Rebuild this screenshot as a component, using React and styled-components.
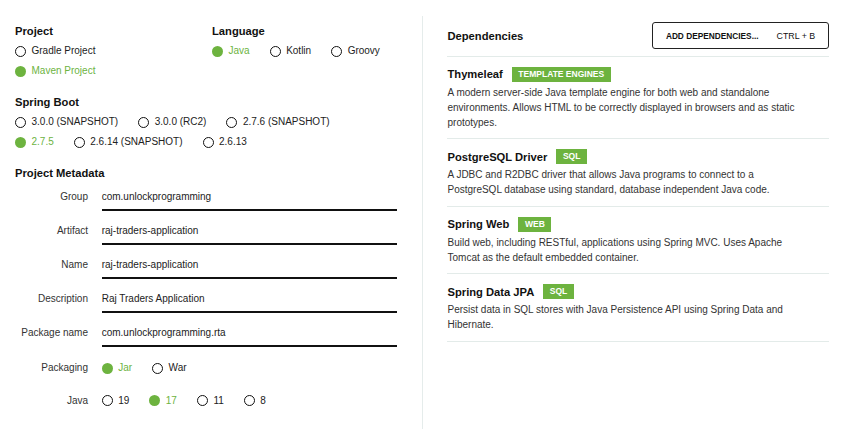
import React from "react";
import styled, { createGlobalStyle } from "styled-components";

const GlobalStyle = createGlobalStyle`
  body {
    margin: 0;
    background: #fff;
    font-family: "Liberation Sans", Arial, sans-serif;
    color: #222;
  }
`;

const Page = styled.div`
  display: flex;
  padding-top: 16px;
  min-height: calc(100vh - 16px);
`;

const LeftPanel = styled.div`
  width: 408px;
  padding: 7px 0 0 15px;
  border-right: 1px solid #e5eceb;
`;

const RightPanel = styled.div`
  width: 382px;
  padding: 6px 15px 0 24px;
`;

const Columns = styled.div`
  display: flex;
`;

const Column = styled.div`
  width: ${(p) => p.width || "auto"};
`;

const Section = styled.div`
  margin-top: ${(p) => p.top || 0}px;
`;

const Heading = styled.div`
  font-size: 11.2px;
  font-weight: bold;
  line-height: 16px;
  color: #111;
  margin-bottom: ${(p) => p.bottom ?? 3}px;
`;

const RadioRows = styled.div`
  display: flex;
  flex-direction: column;
  gap: 2.2px;
`;

const RadioRow = styled.div`
  display: flex;
  align-items: center;
  gap: 20px;
  height: 18px;
`;

const RadioItem = styled.label`
  display: flex;
  align-items: center;
  gap: 5.5px;
  font-size: 10px;
  line-height: 18px;
  color: ${(p) => (p.checked ? "#6db33f" : "#222")};
  cursor: pointer;
  white-space: nowrap;
`;

const Circle = styled.span`
  box-sizing: border-box;
  width: 11px;
  height: 11px;
  border-radius: 50%;
  border: ${(p) => (p.checked ? "none" : "1.5px solid #111")};
  background: ${(p) => (p.checked ? "#6db33f" : "#fff")};
`;

const MetaGrid = styled.div`
  display: grid;
  grid-template-columns: 73px 295px;
  column-gap: 13.7px;
  row-gap: 12px;
  margin-top: 8px;
`;

const MetaLabel = styled.div`
  text-align: right;
  font-size: 10px;
  line-height: ${(p) => (p.radio ? "18px" : "16px")};
  color: #333;
`;

const Field = styled.div`
  font-size: 10px;
  line-height: 16px;
  color: #222;
  padding-bottom: 4px;
  border-bottom: 2px solid #111;
`;

const RadioField = styled.div`
  padding-bottom: 2.5px;
`;

const DepHeader = styled.div`
  display: flex;
  align-items: center;
  justify-content: space-between;
  padding-bottom: 6.5px;
  border-bottom: 1px solid #e3ebe9;
`;

const AddButton = styled.button`
  box-sizing: border-box;
  width: 177px;
  height: 27px;
  background: #fff;
  border: 1px solid #222;
  border-radius: 3px;
  font-family: "Liberation Sans", Arial, sans-serif;
  color: #111;
  display: flex;
  align-items: center;
  justify-content: center;
  gap: 18px;
  padding: 0;
  cursor: pointer;
`;

const ButtonMain = styled.span`
  font-size: 8.3px;
  font-weight: bold;
`;

const ButtonKey = styled.span`
  font-size: 8.8px;
`;

const DepItem = styled.div`
  padding: 9px 0 8.5px;
  border-bottom: 1px solid #e3ebe9;
`;

const DepTitle = styled.div`
  display: flex;
  align-items: center;
  gap: 9px;
  height: 17px;
  margin-bottom: 2px;
`;

const DepName = styled.span`
  font-size: 11.2px;
  font-weight: bold;
  color: #111;
`;

const Badge = styled.span`
  background: #6db33f;
  color: #fff;
  font-size: 8.5px;
  font-weight: bold;
  line-height: 15px;
  padding: 0 6.5px;
`;

const DepDesc = styled.div`
  font-size: 10px;
  line-height: 15px;
  color: #333;
  max-width: 355px;
`;

const Radio = ({ label, checked }) => (
  <RadioItem checked={checked}>
    <Circle checked={checked} />
    {label}
  </RadioItem>
);

const RadioGroup = ({ rows }) => (
  <RadioRows>
    {rows.map((row, i) => (
      <RadioRow key={i}>
        {row.map(([label, checked]) => (
          <Radio key={label} label={label} checked={checked} />
        ))}
      </RadioRow>
    ))}
  </RadioRows>
);

const metadata = [
  ["Group", "com.unlockprogramming"],
  ["Artifact", "raj-traders-application"],
  ["Name", "raj-traders-application"],
  ["Description", "Raj Traders Application"],
  ["Package name", "com.unlockprogramming.rta"],
];

const dependencies = [
  {
    name: "Thymeleaf",
    tag: "TEMPLATE ENGINES",
    desc: "A modern server-side Java template engine for both web and standalone environments. Allows HTML to be correctly displayed in browsers and as static prototypes.",
  },
  {
    name: "PostgreSQL Driver",
    tag: "SQL",
    desc: "A JDBC and R2DBC driver that allows Java programs to connect to a PostgreSQL database using standard, database independent Java code.",
  },
  {
    name: "Spring Web",
    tag: "WEB",
    desc: "Build web, including RESTful, applications using Spring MVC. Uses Apache Tomcat as the default embedded container.",
  },
  {
    name: "Spring Data JPA",
    tag: "SQL",
    desc: "Persist data in SQL stores with Java Persistence API using Spring Data and Hibernate.",
  },
];

const App = () => {
  return (
    <>
      <GlobalStyle />
      <Page>
        <LeftPanel>
          <Columns>
            <Column width="197px">
              <Heading>Project</Heading>
              <RadioGroup
                rows={[[["Gradle Project", false]], [["Maven Project", true]]]}
              />
            </Column>
            <Column>
              <Heading>Language</Heading>
              <RadioGroup
                rows={[
                  [
                    ["Java", true],
                    ["Kotlin", false],
                    ["Groovy", false],
                  ],
                ]}
              />
            </Column>
          </Columns>

          <Section top={14}>
            <Heading>Spring Boot</Heading>
            <RadioGroup
              rows={[
                [
                  ["3.0.0 (SNAPSHOT)", false],
                  ["3.0.0 (RC2)", false],
                  ["2.7.6 (SNAPSHOT)", false],
                ],
                [
                  ["2.7.5", true],
                  ["2.6.14 (SNAPSHOT)", false],
                  ["2.6.13", false],
                ],
              ]}
            />
          </Section>

          <Section top={14}>
            <Heading bottom={0}>Project Metadata</Heading>
            <MetaGrid>
              {metadata.map(([label, value]) => (
                <React.Fragment key={label}>
                  <MetaLabel>{label}</MetaLabel>
                  <Field>{value}</Field>
                </React.Fragment>
              ))}
              <MetaLabel radio>Packaging</MetaLabel>
              <RadioField>
                <RadioRow>
                  <Radio label="Jar" checked />
                  <Radio label="War" />
                </RadioRow>
              </RadioField>
              <MetaLabel radio>Java</MetaLabel>
              <RadioField>
                <RadioRow>
                  <Radio label="19" />
                  <Radio label="17" checked />
                  <Radio label="11" />
                  <Radio label="8" />
                </RadioRow>
              </RadioField>
            </MetaGrid>
          </Section>
        </LeftPanel>

        <RightPanel>
          <DepHeader>
            <Heading bottom={0}>Dependencies</Heading>
            <AddButton>
              <ButtonMain>ADD DEPENDENCIES...</ButtonMain>
              <ButtonKey>CTRL + B</ButtonKey>
            </AddButton>
          </DepHeader>
          {dependencies.map((dep) => (
            <DepItem key={dep.name}>
              <DepTitle>
                <DepName>{dep.name}</DepName>
                <Badge>{dep.tag}</Badge>
              </DepTitle>
              <DepDesc>{dep.desc}</DepDesc>
            </DepItem>
          ))}
        </RightPanel>
      </Page>
    </>
  );
};

export default App;
